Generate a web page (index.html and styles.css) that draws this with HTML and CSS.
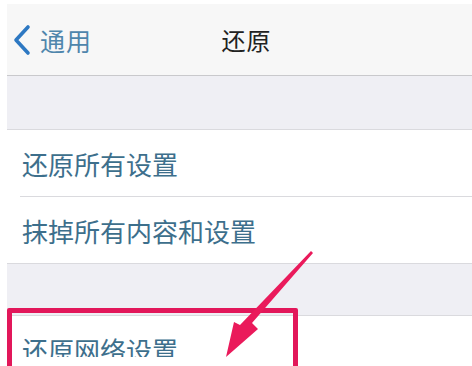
FILE: index.html
```html
<!DOCTYPE html>
<html lang="zh-CN">

<head>
    <meta charset="UTF-8">
    <meta name="viewport" content="width=device-width, initial-scale=1.0">
    <title>还原</title>
    <link rel="stylesheet" href="styles.css">
</head>

<body>
    <div class="screen">

        <div class="navBar">
            <div class="back">
                <svg class="chevron" width="20" height="32" viewBox="0 0 20 32">
                    <path d="M16 3 L4 16 L16 29" fill="none" stroke="#2d78c2" stroke-width="3.6"
                        stroke-linecap="round" stroke-linejoin="round" />
                </svg>
                <span class="backText">通用</span>
            </div>
            <div class="title">还原</div>
        </div>

        <div class="gap"></div>

        <div class="group">
            <div class="row">还原所有设置</div>
            <div class="row">抹掉所有内容和设置</div>
        </div>

        <div class="gap gapSmall"></div>

        <div class="group">
            <div class="row">还原网络设置</div>
        </div>

    </div>

    <!-- zaznaczenie -->
    <div class="redBox"></div>
    <svg class="arrow" width="472" height="366" viewBox="0 0 472 366">
        <path d="M313 253 L252 323 L258 329 L226 357 L234 322 L240 325 L311 251 Z" fill="#ea1a5b" />
    </svg>
</body>

</html>
```

FILE: styles.css
```css
body {
    margin: 0;
    padding: 0;
    background: #fff;
    font-family: "Noto Sans CJK SC", "Noto Sans", sans-serif;
    overflow: hidden;
}

.screen {
    position: relative;
    margin: 4px 0 0 7px;
    height: 353px;
    background: #efeff4;
    overflow: hidden;
}

.navBar {
    position: relative;
    height: 71px;
    background: #f7f7f7;
    border-bottom: 1px solid #c9c9cc;
    display: flex;
    align-items: center;
    justify-content: center;
}

.back {
    position: absolute;
    left: 5px;
    top: 0;
    height: 100%;
    display: flex;
    align-items: center;
    gap: 8px;
}

.backText {
    font-size: 25px;
    color: #4f86ac;
    letter-spacing: 1px;
}

.title {
    font-size: 24px;
    color: #222;
    letter-spacing: 1px;
    margin-left: 14px;
}

.gap {
    height: 53px;
}

.gapSmall {
    height: 51px;
}

.group {
    background: #fff;
    border-top: 1px solid #dadade;
    border-bottom: 1px solid #dadade;
}

.row {
    height: 66px;
    margin-left: 13px;
    padding-left: 2px;
    display: flex;
    align-items: center;
    font-size: 26px;
    color: #3d6f8c;
    border-bottom: 1px solid #dadade;
}

.row:last-child {
    border-bottom: none;
}

.redBox {
    position: absolute;
    left: 7px;
    top: 308px;
    width: 281px;
    height: 100px;
    border: 5px solid #e2175a;
    border-radius: 2px;
}

.arrow {
    position: absolute;
    left: 0;
    top: 0;
}
```
